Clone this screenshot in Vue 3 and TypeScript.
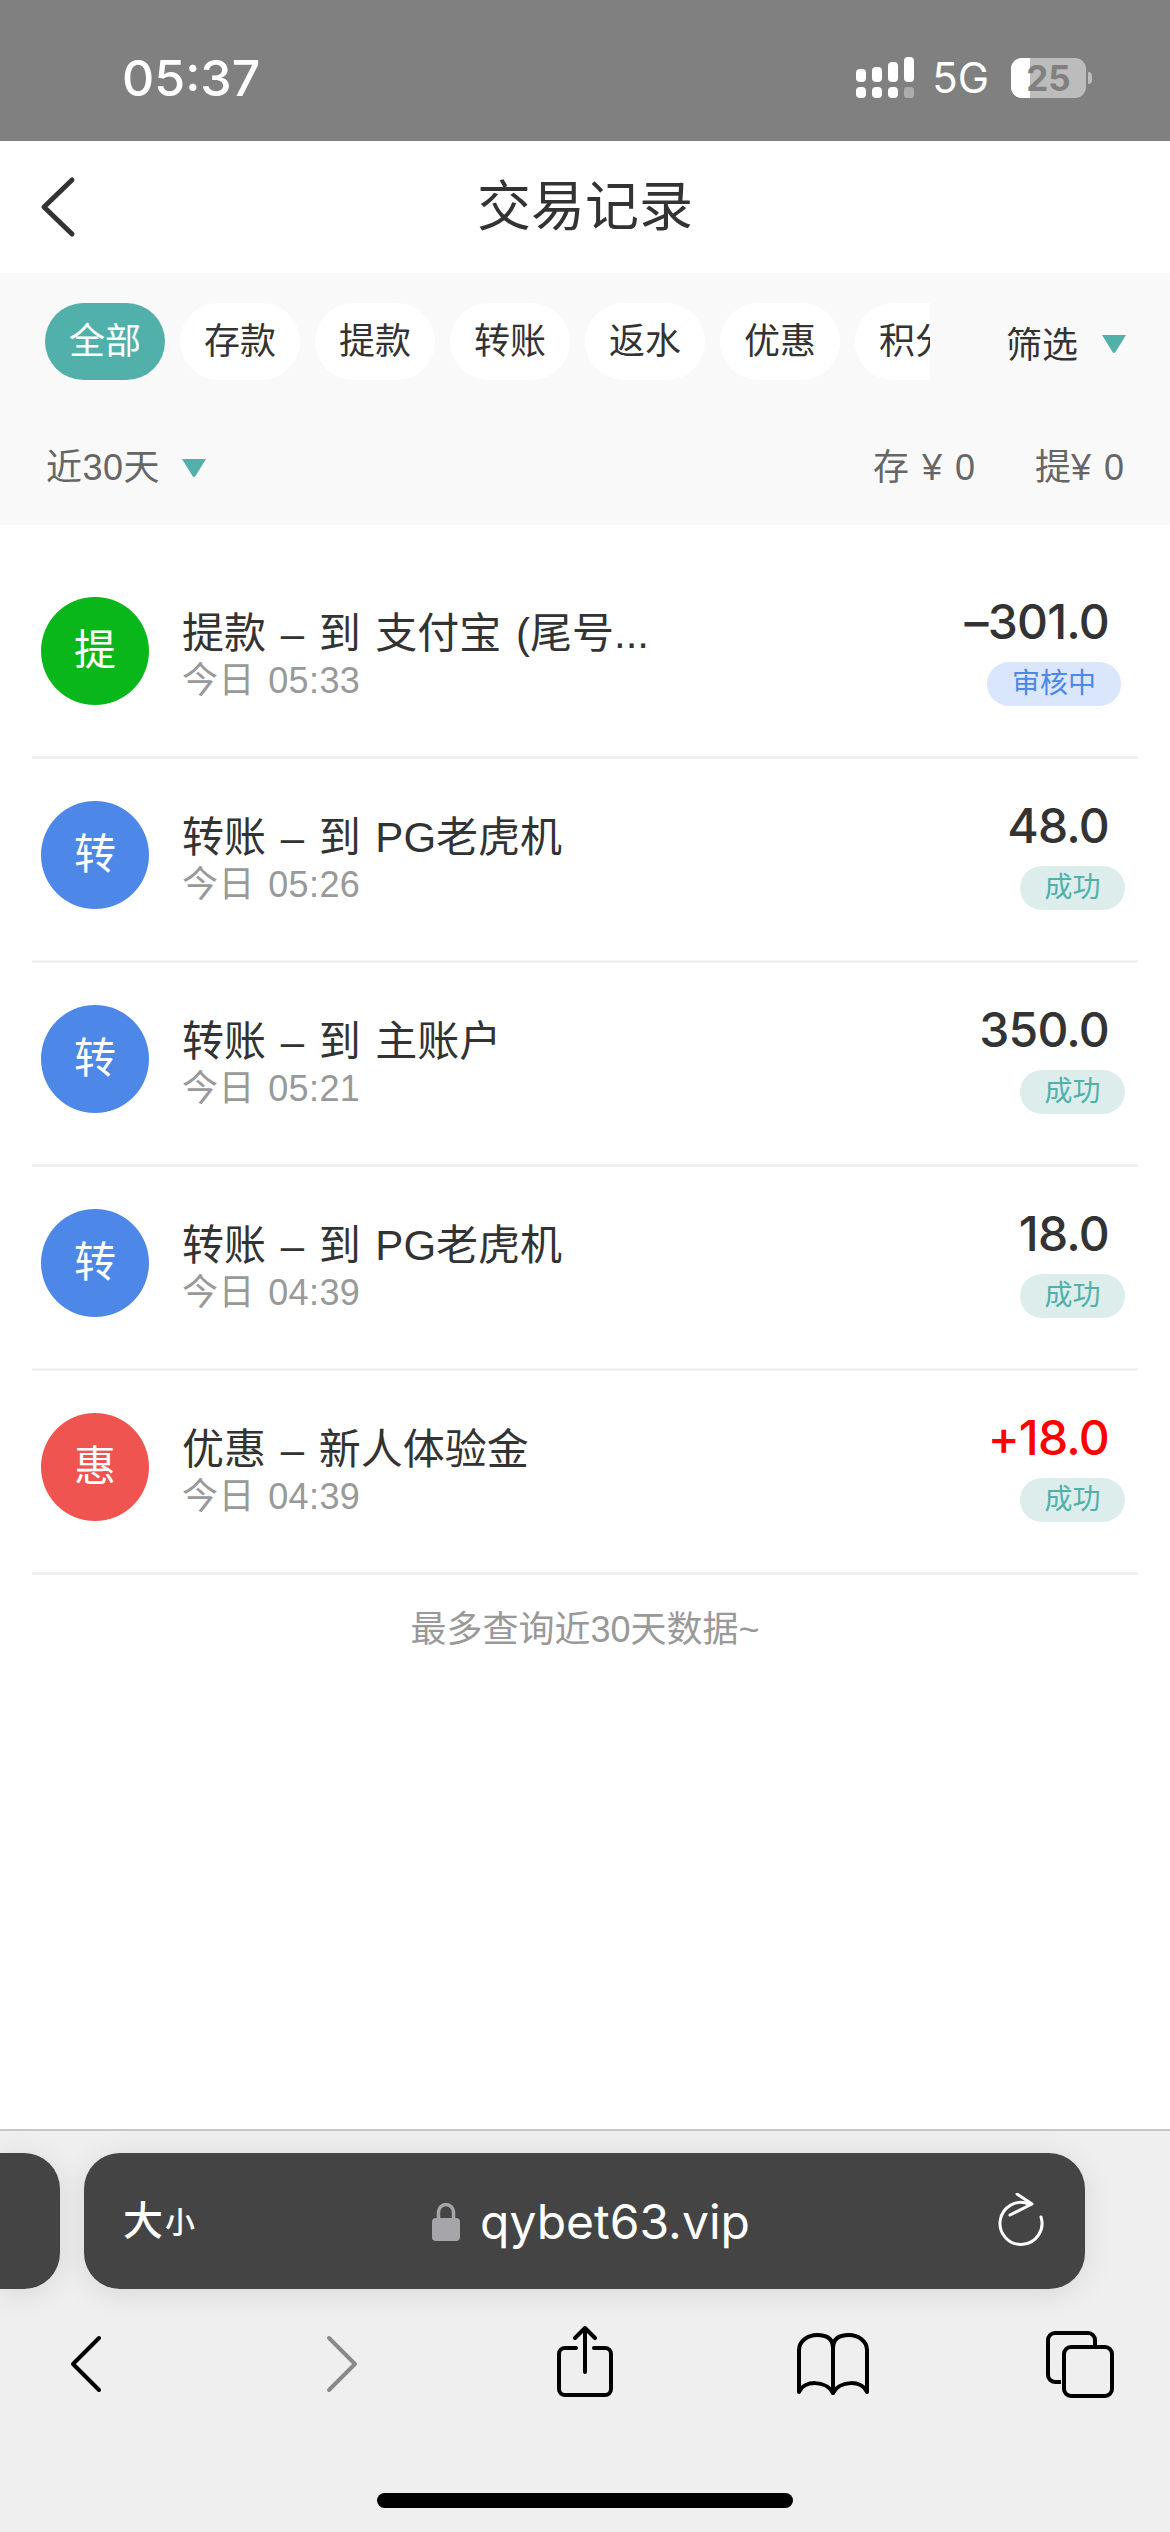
<script setup lang="ts">
interface Record {
  icon: string
  kind: 'out' | 'move' | 'promo'
  title: string
  time: string
  amount: string
  status: string
  pending?: boolean
  plus?: boolean
}

const tabs = ['全部', '存款', '提款', '转账', '返水', '优惠', '积分']

const records: Record[] = [
  { icon: '提', kind: 'out', title: '提款 – 到 支付宝 (尾号...', time: '今日 05:33', amount: '–301.0', status: '审核中', pending: true },
  { icon: '转', kind: 'move', title: '转账 – 到 PG老虎机', time: '今日 05:26', amount: '48.0', status: '成功' },
  { icon: '转', kind: 'move', title: '转账 – 到 主账户', time: '今日 05:21', amount: '350.0', status: '成功' },
  { icon: '转', kind: 'move', title: '转账 – 到 PG老虎机', time: '今日 04:39', amount: '18.0', status: '成功' },
  { icon: '惠', kind: 'promo', title: '优惠 – 新人体验金', time: '今日 04:39', amount: '+18.0', status: '成功', plus: true }
]
</script>

<template>
  <div class="page">
    <div class="status">
      <span class="status__time">05:37</span>
      <div class="status__right">
        <svg class="signal" width="58" height="41" viewBox="0 0 58 41" fill="#fff">
          <rect x="0" y="12" width="10" height="13" rx="4" />
          <rect x="16" y="10" width="10" height="15" rx="4" />
          <rect x="32" y="5" width="10" height="20" rx="4" />
          <rect x="48" y="0" width="10" height="25" rx="4" />
          <rect x="0" y="30" width="10" height="11" rx="4" />
          <rect x="16" y="30" width="10" height="11" rx="4" />
          <rect x="32" y="30" width="10" height="11" rx="4" />
          <rect x="48" y="30" width="10" height="11" rx="3" fill-opacity="0.35" />
        </svg>
        <span class="status__net">5G</span>
        <div class="battery"><span class="battery__fill"></span><span class="battery__num">25</span></div>
      </div>
    </div>

    <div class="nav">
      <svg class="nav__back" width="40" height="64" viewBox="0 0 40 64" fill="none">
        <path d="M34 5 L6 32 L34 59" stroke="#333" stroke-width="5" stroke-linecap="round" stroke-linejoin="round" />
      </svg>
      <span class="nav__title">交易记录</span>
    </div>

    <div class="filters">
      <div class="filters__top">
        <div class="tabs">
          <span v-for="(tab, i) in tabs" :key="tab" class="tab" :class="{ 'tab--on': i === 0 }">{{ tab }}</span>
        </div>
        <div class="pick">
          <span>筛选</span>
          <svg class="pick__arrow" width="24" height="20" viewBox="0 0 24 20"><path d="M0 1 H24 L13.5 18 Q12 20 10.5 18 Z" fill="#52b0ab" /></svg>
        </div>
      </div>
      <div class="filters__sum">
        <div class="range">
          <span>近30天</span>
          <svg width="24" height="20" viewBox="0 0 24 20"><path d="M0 1 H24 L13.5 18 Q12 20 10.5 18 Z" fill="#52b0ab" /></svg>
        </div>
        <div class="totals">
          <span>存 ¥ 0</span>
          <span>提¥ 0</span>
        </div>
      </div>
    </div>

    <div class="list">
      <div v-for="(item, i) in records" :key="i" class="row">
        <div class="row__icon" :class="`row__icon--${item.kind}`">{{ item.icon }}</div>
        <div class="row__text">
          <div class="row__title">{{ item.title }}</div>
          <div class="row__time">{{ item.time }}</div>
        </div>
        <div class="row__right">
          <div class="row__amount" :class="{ 'row__amount--plus': item.plus }">{{ item.amount }}</div>
          <div class="badge" :class="{ 'badge--pending': item.pending }">{{ item.status }}</div>
        </div>
      </div>
    </div>
    <div class="list-end">最多查询近30天数据~</div>

    <div class="spacer"></div>

    <div class="browser">
      <div class="urlrow">
        <div class="urlstub"></div>
        <div class="url">
          <span class="url__size"><b>大</b><small>小</small></span>
          <div class="url__addr">
            <svg width="30" height="39" viewBox="0 0 30 39" fill="none">
              <path d="M7.5 18 V10 a7.5 7.5 0 0 1 15 0 V18" stroke="#a5a5aa" stroke-width="3.5" />
              <rect x="1" y="16" width="28" height="23" rx="4" fill="#a5a5aa" />
            </svg>
            <span>qybet63.vip</span>
          </div>
          <svg class="url__reload" width="46" height="56" viewBox="0 0 46 56" fill="none" stroke="#fff" stroke-width="3" stroke-linecap="round" stroke-linejoin="round">
            <path d="M31 11 A21 21 0 1 0 43 24" />
            <path d="M19 1 L34 11 L12 22" />
          </svg>
        </div>
      </div>

      <div class="tools">
        <svg width="80" height="80" viewBox="0 0 80 80" fill="none" stroke="#000" stroke-width="4" stroke-linecap="round" stroke-linejoin="round">
          <path d="M53 16 L27 42 L53 68" />
        </svg>
        <svg width="80" height="80" viewBox="0 0 80 80" fill="none" stroke="#8a8a8a" stroke-width="4" stroke-linecap="round" stroke-linejoin="round">
          <path d="M34 16 L60 42 L34 68" />
        </svg>
        <svg width="80" height="80" viewBox="0 0 80 80" fill="none" stroke="#000" stroke-width="4" stroke-linecap="round" stroke-linejoin="round">
          <path d="M33 26 H22 a6 6 0 0 0 -6 6 V67 a6 6 0 0 0 6 6 H62 a6 6 0 0 0 6 -6 V32 a6 6 0 0 0 -6 -6 H51" />
          <path d="M42 50 V6 M32 16 L42 6 L52 16" />
        </svg>
        <svg width="80" height="80" viewBox="0 0 80 80" fill="none" stroke="#000" stroke-width="4" stroke-linecap="round" stroke-linejoin="round">
          <path d="M41 26 C41 16 34 13 25 13 C16 13 7 19 7 28 V70 C12 58 34 58 41 71 C48 58 70 58 75 70 V28 C75 19 66 13 57 13 C48 13 41 16 41 26 Z" />
          <path d="M41 26 V71" />
        </svg>
        <svg width="80" height="80" viewBox="0 0 80 80" fill="none" stroke="#000" stroke-width="4" stroke-linejoin="round">
          <path d="M21 60 H15 a7 7 0 0 1 -7 -7 V18 a7 7 0 0 1 7 -7 H48 a7 7 0 0 1 7 7 V24" />
          <rect x="24" y="25" width="48" height="49" rx="7" />
        </svg>
      </div>
      <div class="home"></div>
    </div>
  </div>
</template>

<style>
html,
body {
  margin: 0;
  background: #fff;
}
</style>

<style scoped>
.page {
  width: 1170px;
  height: 2532px;
  display: flex;
  flex-direction: column;
  overflow: hidden;
  background: #fff;
  font-family: "Liberation Sans", "Noto Sans CJK SC", sans-serif;
  color: #333;
}

.status {
  height: 141px;
  flex: none;
  background: #808080;
  display: flex;
  align-items: center;
  justify-content: space-between;
  padding: 14px 84px 0 122px;
  box-sizing: border-box;
  color: #fff;
  font-family: Inter, sans-serif;
}

.status__time {
  font-size: 50px;
  font-weight: 500;
}

.status__right {
  display: flex;
  align-items: center;
}

.signal {
  margin-right: 18px;
}

.status__net {
  font-size: 42px;
  margin-right: 22px;
}

.battery {
  position: relative;
  width: 75px;
  height: 40px;
  border-radius: 11px;
  background: #bcbcbc;
  display: flex;
  align-items: center;
  justify-content: center;
}

.battery::after {
  content: "";
  position: absolute;
  left: 77px;
  top: 14px;
  width: 4px;
  height: 12px;
  border-radius: 0 6px 6px 0;
  background: #bcbcbc;
}

.battery__fill {
  position: absolute;
  left: 0;
  top: 0;
  bottom: 0;
  width: 19px;
  background: #fff;
  border-radius: 11px 0 0 11px;
}

.battery__num {
  position: relative;
  color: #808080;
  font-size: 35px;
  font-weight: 700;
  line-height: 40px;
}

.nav {
  height: 132px;
  flex: none;
  position: relative;
  display: flex;
  align-items: center;
  justify-content: center;
}

.nav__back {
  position: absolute;
  left: 38px;
  top: 34px;
}

.nav__title {
  font-size: 54px;
  line-height: 60px;
}

.filters {
  height: 252px;
  flex: none;
  background: #f9f9f9;
  box-sizing: border-box;
  padding-top: 30px;
}

.filters__top {
  display: flex;
  align-items: center;
}

.tabs {
  width: 885px;
  margin-left: 45px;
  display: flex;
  gap: 15px;
  overflow: hidden;
}

.tab {
  flex: none;
  width: 120px;
  height: 77px;
  border-radius: 39px;
  background: #fff;
  font-size: 36px;
  line-height: 77px;
  text-align: center;
}

.tab--on {
  background: #52b0ab;
  color: #fff;
}

.pick {
  margin-left: 76px;
  display: flex;
  align-items: center;
  gap: 24px;
  font-size: 36px;
  color: #333;
}

.pick__arrow {
  margin-top: 4px;
}

.filters__sum {
  display: flex;
  align-items: center;
  justify-content: space-between;
  padding: 65px 46px 0 46px;
  font-size: 36px;
  line-height: 46px;
  color: #666;
}

.range {
  display: flex;
  align-items: center;
  gap: 22px;
  letter-spacing: 0.5px;
}

.totals {
  display: flex;
  gap: 60px;
  word-spacing: 3px;
}

.list {
  flex: none;
  margin: 30px 32px 0;
}

.row {
  display: flex;
  padding: 42px 0 51px;
  border-bottom: 3px solid #f1f1f1;
  height: 204px;
  box-sizing: border-box;
}

.row__icon {
  flex: none;
  width: 108px;
  height: 108px;
  margin-left: 9px;
  border-radius: 50%;
  color: #fff;
  font-size: 42px;
  line-height: 108px;
  text-align: center;
}

.row__icon--out {
  background: #0ab71a;
}

.row__icon--move {
  background: #4d87e8;
}

.row__icon--promo {
  background: #f05450;
}

.row__text {
  flex: 1;
  margin-left: 33px;
  padding-top: 13px;
}

.row__title {
  font-size: 42px;
  line-height: 48px;
  white-space: nowrap;
  word-spacing: 3px;
}

.row__time {
  font-size: 36px;
  line-height: 46px;
  color: #999;
  word-spacing: 3px;
  letter-spacing: 0.4px;
}

.row__right {
  display: flex;
  flex-direction: column;
  align-items: flex-end;
}

.row__amount {
  font-family: Inter, sans-serif;
  font-size: 48px;
  font-weight: 500;
  line-height: 48px;
  margin-top: 1px;
  margin-right: 29px;
  letter-spacing: -0.8px;
}

.row__amount--plus {
  color: #f00;
}

.badge {
  margin-top: 16px;
  margin-right: 13px;
  width: 105px;
  height: 44px;
  border-radius: 22px;
  background: #dcedec;
  color: #52b0ab;
  font-size: 28px;
  line-height: 44px;
  text-align: center;
}

.badge--pending {
  margin-right: 17px;
  width: 134px;
  background: #dae6fb;
  color: #4d87e8;
}

.list-end {
  flex: none;
  margin-top: 32px;
  text-align: center;
  font-size: 36px;
  line-height: 46px;
  color: #999;
}

.spacer {
  flex: 1;
}

.browser {
  flex: none;
  height: 403px;
  box-sizing: border-box;
  background: #efefef;
  border-top: 2px solid #c6c6c6;
}

.urlrow {
  margin-top: 22px;
  display: flex;
  gap: 24px;
}

.urlstub {
  width: 60px;
  height: 136px;
  border-radius: 0 36px 36px 0;
  background: #444;
  box-shadow: 0 4px 30px rgba(0, 0, 0, 0.1);
}

.url {
  width: 1001px;
  height: 136px;
  border-radius: 36px;
  background: #444;
  box-shadow: 0 4px 30px rgba(0, 0, 0, 0.1);
  display: flex;
  align-items: center;
  justify-content: space-between;
  padding: 0 41px 0 39px;
  box-sizing: border-box;
  color: #fff;
}

.url__size {
  display: flex;
  align-items: flex-end;
  width: 80px;
}

.url__size b {
  font-size: 40px;
  line-height: 46px;
  font-weight: 500;
}

.url__size small {
  font-size: 30px;
  font-weight: 500;
  line-height: 42px;
  margin-left: 2px;
}

.url__addr {
  display: flex;
  align-items: center;
  gap: 19px;
  font-family: Inter, sans-serif;
  font-size: 48px;
  margin-left: -20px;
}

.tools {
  margin-top: 33px;
  height: 80px;
  display: flex;
  justify-content: space-between;
  padding: 0 50px 0 46px;
}

.home {
  width: 416px;
  height: 15px;
  margin: 91px auto 0;
  border-radius: 8px;
  background: #000;
}
</style>
